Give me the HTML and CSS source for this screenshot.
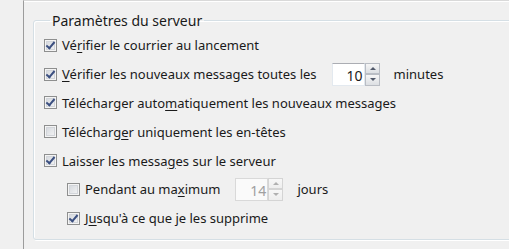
FILE: index.html
```html
<!DOCTYPE html>
<html lang="fr">
<head>
    <meta charset="UTF-8">
    <title>Paramètres du serveur</title>
    <link rel="stylesheet" href="styles.css">
</head>
<body>

    <div class="panel">
        <fieldset class="group">
            <legend>Paramètres du serveur</legend>

            <div class="row">
                <span class="check on"></span>
                <span>Vé<u>r</u>ifier le courrier au lancement</span>
            </div>

            <div class="row">
                <span class="check on"></span>
                <span><u>V</u>érifier les nouveaux messages toutes les</span>
                <span class="spin">
                    <span class="spin-value">10</span>
                    <span class="spin-buttons">
                        <span class="spin-btn up"></span>
                        <span class="spin-btn down"></span>
                    </span>
                </span>
                <span>minutes</span>
            </div>

            <div class="row">
                <span class="check on"></span>
                <span>Télécharger auto<u>m</u>atiquement les nouveaux messages</span>
            </div>

            <div class="row">
                <span class="check"></span>
                <span>Télécharg<u>e</u>r uniquement les en-têtes</span>
            </div>

            <div class="row">
                <span class="check on"></span>
                <span>Laisser les messa<u>g</u>es sur le serveur</span>
            </div>

            <div class="row sub">
                <span class="check"></span>
                <span>Pendant au ma<u>x</u>imum</span>
                <span class="spin disabled">
                    <span class="spin-value">14</span>
                    <span class="spin-buttons">
                        <span class="spin-btn up"></span>
                        <span class="spin-btn down"></span>
                    </span>
                </span>
                <span>jours</span>
            </div>

            <div class="row sub">
                <span class="check on"></span>
                <span>J<u>u</u>squ'à ce que je les supprime</span>
            </div>
        </fieldset>
    </div>

</body>
</html>
```

FILE: styles.css
```css
html, body {
    margin: 0;
    height: 100%;
    overflow: hidden;
}

body {
    background-color: #f0f0f0;
    font-family: "Noto Sans", "Open Sans", sans-serif;
    font-size: 13px;
    color: #1a1a1a;
}

/* cadre de l'onglet */
.panel {
    margin-left: 23px;
    height: 100%;
    border-left: 1px solid #9c9c9c;
    border-top: 1px solid #d9d9d9;
    box-shadow: inset 0 1px 0 #ffffff;
    padding: 10px 0 0 9px;
    box-sizing: border-box;
}

.group {
    margin: 0 -8px 0 0;
    height: 229px;
    box-sizing: border-box;
    border: 1px solid #d5dfe5;
    border-radius: 3px;
    box-shadow: inset 1px 1px 0 #ffffff, 1px 1px 0 #ffffff;
    padding: 1px 0 0 10px;
}

.group legend {
    margin-left: 6px;
    padding: 0 2px;
    font-size: 14px;
    color: #1a1a1a;
}

.row {
    display: flex;
    align-items: center;
    height: 28.8px;
}

.row.sub {
    padding-left: 23px;
}

u {
    text-decoration-thickness: 1px;
    text-underline-offset: 2px;
}

/* case à cocher */
.check {
    width: 13px;
    height: 13px;
    margin-right: 5px;
    flex: none;
    box-sizing: border-box;
    border: 1px solid #8e8f8f;
    background: linear-gradient(135deg, #d0d4da, #f7f7f7);
    box-shadow: inset 0 0 0 1px #f4f4f4, inset 0 0 0 2px #d2d5da;
    position: relative;
}

.check.on::after {
    content: "";
    position: absolute;
    left: 3px;
    top: 0px;
    width: 3px;
    height: 7px;
    border: solid #3b4f80;
    border-width: 0 2px 2px 0;
    transform: rotate(40deg);
}

/* champ numérique */
.spin {
    display: flex;
    height: 23px;
    margin: 0 14px 0 15px;
}

.spin-value {
    width: 33px;
    box-sizing: border-box;
    border: 1px solid #e3e9ef;
    border-top-color: #abadb3;
    background-color: #ffffff;
    text-align: right;
    padding: 2px 1px 0 0;
    font-size: 14px;
}

.spin-buttons {
    display: flex;
    flex-direction: column;
    width: 15px;
}

.spin-btn {
    flex: 1;
    box-sizing: border-box;
    border: 1px solid #b9bdc4;
    background: linear-gradient(#f6f6f6, #dcdfe3);
    position: relative;
}

.spin-btn::after {
    content: "";
    position: absolute;
    left: 4px;
    width: 0;
    height: 0;
    border-left: 3px solid transparent;
    border-right: 3px solid transparent;
}

.spin-btn.up::after {
    top: 3px;
    border-bottom: 3px solid #51596a;
}

.spin-btn.down::after {
    top: 3px;
    border-top: 3px solid #51596a;
}

.spin.disabled .spin-value {
    color: #a0a0a0;
    border-color: #d9d9d9;
    background-color: #fafafa;
}

.spin.disabled .spin-btn {
    border-color: #d4d4d4;
    background: linear-gradient(#f7f7f7, #eeeeee);
}

.spin.disabled .spin-btn::after {
    border-bottom-color: #b0b0b0;
    border-top-color: #b0b0b0;
}

.spin.disabled .spin-btn.up::after {
    border-top-color: transparent;
}

.spin.disabled .spin-btn.down::after {
    border-bottom-color: transparent;
}
```
